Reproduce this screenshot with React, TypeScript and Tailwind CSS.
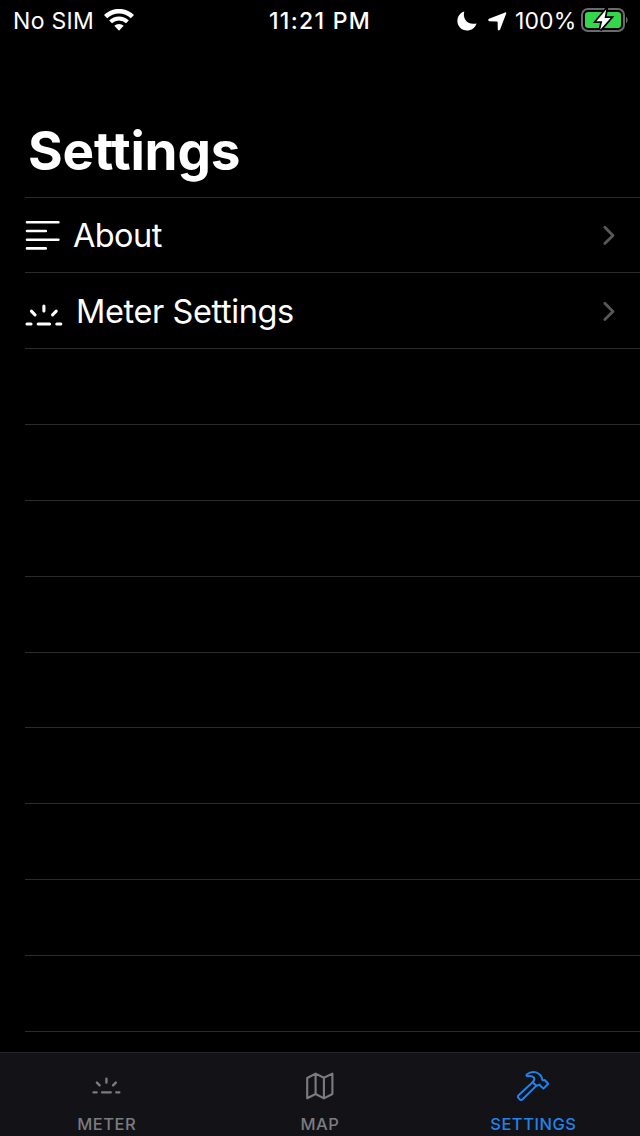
import type { ReactNode } from "react";

const emptyRows = [
  "h-[76px]",
  "h-[76px]",
  "h-[76px]",
  "h-[76px]",
  "h-[75px]",
  "h-[76px]",
  "h-[76px]",
  "h-[76px]",
  "h-[76px]",
];

function WifiIcon() {
  return (
    <svg className="mb-[2px]" width="30" height="22" viewBox="0 0 30 22" fill="none" stroke="white">
      <path d="M1.6 7.6 A19.2 19.2 0 0 1 28.4 7.6" strokeWidth="4.6" />
      <path d="M6.6 12.9 A12 12 0 0 1 23.4 12.9" strokeWidth="4" />
      <path
        d="M10.3 16.8 A6.8 6.8 0 0 1 19.7 16.8 L15 21.8 Z"
        fill="white"
        stroke="none"
      />
    </svg>
  );
}

function MoonIcon() {
  return (
    <svg width="20" height="20" viewBox="0 0 20 20" fill="white">
      <path d="M7.3 0.4 C5.4 6.8 9.8 14.6 19.6 12.4 C18 16.8 14.4 19.4 10 19.4 C4.6 19.4 0.4 15.2 0.4 9.9 C0.4 5.4 3.2 1.6 7.3 0.4 Z" />
    </svg>
  );
}

function LocationIcon() {
  return (
    <svg width="19" height="19" viewBox="0 0 19 19" fill="white">
      <path d="M17.2 0.4 Q18.6 0 18.2 1.5 L12.1 17.4 Q10.6 19.4 9.8 17.4 L9.6 10 Q9.6 9.4 9 9.4 L1.2 9.2 Q-0.8 8.3 1 6.8 Z" />
    </svg>
  );
}

function BatteryIcon() {
  return (
    <svg className="mb-[2px]" width="49" height="24" viewBox="0 0 49 24">
      <rect x="1" y="1" width="42" height="22" rx="6" fill="none" stroke="#6b6b6b" strokeWidth="2" />
      <rect x="4" y="4" width="36" height="16" rx="3.2" fill="#32d74b" />
      <path d="M45 8.5 Q48.4 12 45 15.5 Z" fill="#6b6b6b" />
      {/* black stroke sits behind the bolt and cuts it out of the cell */}
      <path
        d="M25.2 1.6 L15.4 13.2 H21.2 L19.2 21.8 L29.6 10 H23.6 Z"
        fill="white"
        stroke="black"
        strokeWidth="3.4"
        style={{ paintOrder: "stroke" }}
      />
    </svg>
  );
}

function LinesIcon() {
  return (
    <svg width="35" height="30" viewBox="0 0 35 30" stroke="white" strokeWidth="2.6" strokeLinecap="round">
      <path d="M2 2.2 H33.4 M2 11 H20.8 M2 19.7 H33.4 M2 28.4 H20.8" />
    </svg>
  );
}

function RaysIcon({ className }: { className: string }) {
  return (
    <svg className={className} viewBox="0 0 38 22" fill="none" stroke="currentColor" strokeWidth="3.1" strokeLinecap="round">
      <path d="M2 20 H6 M13.2 20 H24.6 M31.8 20 H35.8 M6.4 7.2 L10 10.8 M18.9 2 V7 M31.2 7.2 L27.6 10.8" />
    </svg>
  );
}

function MapIcon() {
  return (
    <svg width="28" height="28" viewBox="0 0 28 28" fill="none" stroke="currentColor" strokeWidth="2.1" strokeLinejoin="round">
      <path d="M1.2 6 L9.6 1.6 L17.9 5.8 L26.4 1.6 V22 L17.9 26.4 L9.6 22 L1.2 26.2 Z M9.6 1.6 V22 M17.9 5.8 V26.4" />
    </svg>
  );
}

function HammerIcon() {
  return (
    <svg width="34" height="32" viewBox="0 0 34 32" fill="none" stroke="currentColor" strokeWidth="2" strokeLinejoin="round">
      <path d="M16.6 12.2 L2.6 25.2 Q1.3 26.6 2.4 27.9 L4 29.6 Q5.3 30.6 6.6 29.3 L20.4 15.6" />
      <path d="M10.8 4.6 Q14.8 1.2 20 2.4 Q25.8 4.6 26 9 Q26.2 10.6 27.6 10.2 L28.6 10 L32.2 13.8 L27.4 18.6 L24 15.6 L23.8 14.6 L20.4 15.8 L16.6 12.2 Q19.4 9.6 17.8 7.4 Q15.8 5.6 12 6.2 Q9.8 6.2 10.8 4.6 Z" />
    </svg>
  );
}

function ChevronIcon() {
  return (
    <svg width="14" height="22" viewBox="0 0 14 22" fill="none" stroke="#58585c" strokeWidth="2.8" strokeLinecap="round" strokeLinejoin="round">
      <path d="M2.8 3.2 L11 11.4 L2.8 19.6" />
    </svg>
  );
}

function StatusBar() {
  return (
    <header className="grid h-10 grid-cols-3 items-center text-[23px] leading-10">
      <div className="flex items-center gap-[10px] pl-[13px]">
        <span className="w-[81px] pt-px tracking-[0.3px] whitespace-nowrap">No SIM</span>
        <WifiIcon />
      </div>
      <div className="pt-px text-center font-medium tracking-[1.3px]">11:21 PM</div>
      <div className="flex items-center justify-end pr-[10px]">
        <span className="pt-px">
          <MoonIcon />
        </span>
        <span className="ml-[11px] pt-px">
          <LocationIcon />
        </span>
        <span className="mr-[6px] ml-[8px] w-[60px] pt-px tracking-[0.1px] whitespace-nowrap">100%</span>
        <BatteryIcon />
      </div>
    </header>
  );
}

function SettingsRow({
  icon,
  label,
  className,
}: {
  icon: ReactNode;
  label: string;
  className: string;
}) {
  return (
    <li className={`flex items-center border-b border-[#2b2b2d] pr-6 text-[32.5px] ${className}`}>
      {icon}
      <span className="pt-[3px]">{label}</span>
      <span className="ml-auto">
        <ChevronIcon />
      </span>
    </li>
  );
}

function Tab({ icon, label, className }: { icon: ReactNode; label: string; className: string }) {
  return (
    <button className={`flex flex-1 flex-col items-center ${className}`}>
      <span className="flex h-[61px] items-center pt-[4px]">{icon}</span>
      <span className="text-[16.5px] leading-5 font-medium tracking-[0.5px]">{label}</span>
    </button>
  );
}

export default function App() {
  return (
    <div className="flex h-[1136px] w-[640px] flex-col overflow-hidden bg-black font-['Inter','Liberation_Sans',sans-serif] text-white">
      <StatusBar />
      <main className="flex-1 pl-[25px]">
        <h1 className="h-[158px] border-b border-[#2b2b2d] pt-[79px] pl-[3px] text-[53px] leading-[64px] font-bold tracking-[-0.2px]">
          Settings
        </h1>
        <ul>
          <SettingsRow
            className="h-[75px] gap-[13px] tracking-[-0.6px]"
            label="About"
            icon={<LinesIcon />}
          />
          <SettingsRow
            className="h-[76px] gap-[13px] tracking-[-0.4px]"
            label="Meter Settings"
            icon={<RaysIcon className="mt-[9px] h-[22px] w-[38px]" />}
          />
          {emptyRows.map((height, i) => (
            <li key={i} className={`border-b border-[#2b2b2d] ${height}`} />
          ))}
        </ul>
      </main>
      <nav className="flex h-[84px] border-t border-[#262628] bg-[#131317]">
        <Tab className="text-[#7c7c80]" label="METER" icon={<RaysIcon className="h-[17px] w-[29px]" />} />
        <Tab className="text-[#7c7c80]" label="MAP" icon={<MapIcon />} />
        <Tab className="text-[#2382e6]" label="SETTINGS" icon={<HammerIcon />} />
      </nav>
    </div>
  );
}
